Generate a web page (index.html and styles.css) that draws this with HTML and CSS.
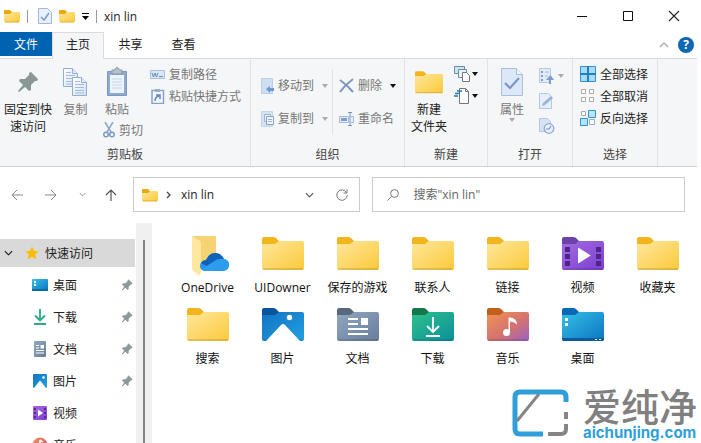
FILE: index.html
```html
<!DOCTYPE html>
<html lang="zh-CN">
<head>
<meta charset="utf-8">
<title>xin lin</title>
<link rel="stylesheet" href="styles.css">
</head>
<body>
<svg class="defs" width="0" height="0" aria-hidden="true">
  <defs>
    <linearGradient id="gYellow" x1="0" y1="0" x2="1" y2="1"><stop offset="0" stop-color="#ffe79c"/><stop offset="1" stop-color="#fbc93a"/></linearGradient>
    <linearGradient id="gBlue" x1="0" y1="0" x2="1" y2="1"><stop offset="0" stop-color="#1273c2"/><stop offset="1" stop-color="#22a0e2"/></linearGradient>
    <linearGradient id="gSlate" x1="0" y1="0" x2="1" y2="1"><stop offset="0" stop-color="#93a7c0"/><stop offset="1" stop-color="#667d9d"/></linearGradient>
    <linearGradient id="gGreen" x1="0" y1="0" x2="1" y2="1"><stop offset="0" stop-color="#30c18b"/><stop offset="1" stop-color="#0a8f9c"/></linearGradient>
    <linearGradient id="gMusic" x1="0" y1="0" x2="1" y2="1"><stop offset="0" stop-color="#f29455"/><stop offset=".55" stop-color="#d4736f"/><stop offset="1" stop-color="#9a62c4"/></linearGradient>
    <linearGradient id="gPurple" x1="0" y1="0" x2="1" y2="1"><stop offset="0" stop-color="#a36be0"/><stop offset="1" stop-color="#7d3fd0"/></linearGradient>
    <linearGradient id="gDesk" x1="0" y1="0" x2="1" y2="1"><stop offset="0" stop-color="#35c0e8"/><stop offset="1" stop-color="#0b74c0"/></linearGradient>
    <linearGradient id="gDoc" x1="0" y1="0" x2="1" y2="1"><stop offset="0" stop-color="#ffffff"/><stop offset="1" stop-color="#d3e2f5"/></linearGradient>
  </defs>
  <symbol id="tab" viewBox="0 0 42 36"><path d="M0 4q0-2 2-2h9q2 0 3 1l3 3h10v6H0z"/></symbol>
  <symbol id="body" viewBox="0 0 42 36"><path d="M0 9h13l4-3h23q2 0 2 2v25q0 2-2 2H2q-2 0-2-2z"/><path d="M1 34h40" stroke="#000" stroke-opacity=".22" stroke-width="1"/></symbol>
  <symbol id="folder" viewBox="0 0 42 36"><use href="#tab" fill="#f2b51d"/><use href="#body" fill="url(#gYellow)"/></symbol>
  <symbol id="miniFolder" viewBox="0 0 16 14"><path d="M0 2q0-1 1-1h5l2 2v3H0z" fill="#e9a910"/><path d="M0 5h6l2-2h7q1 0 1 1v8q0 1-1 1H1q-1 0-1-1z" fill="url(#gYellow)"/><path d="M1 13h14" stroke="#e6ad29" stroke-width="1"/></symbol>
  <symbol id="pin" viewBox="0 0 22 22"><path d="M14 1l7 7-1 2h-2l-4 4v5l-2 1-4-4-6 5-1-1 5-6-4-4 1-2h5l4-4V2z"/></symbol>
  <symbol id="caret" viewBox="0 0 6 4"><path d="M0 0h6L3 4z"/></symbol>
  <symbol id="chev" viewBox="0 0 10 6"><path d="M1 1l4 4 4-4" fill="none" stroke="currentColor" stroke-width="1.3"/></symbol>
  <symbol id="page" viewBox="0 0 15 19"><path d="M.5.5h9l5 5v13H.5z" fill="url(#gDoc)" stroke="#93aed3"/><path d="M9.500.5v5h5" fill="#e3edf9" stroke="#93aed3"/><path d="M3 4.500h5M3 7.500h9M3 10.500h9M3 13.500h9M3 16h9" stroke="#a5bbdb"/></symbol>
</svg>

<main class="window">
  <header class="titlebar">
    <svg class="i16" viewBox="0 0 16 14"><use href="#miniFolder"/></svg>
    <span class="vsep"></span>
    <button class="plain" aria-label="属性"><svg width="14" height="16" viewBox="0 0 14 16"><path d="M.5.5h9l4 4v11H.5z" fill="#e8f0fb" stroke="#a3b7d8"/><path d="M3 9l3 3 5-7" fill="none" stroke="#7c9ccc" stroke-width="1.500"/></svg></button>
    <button class="plain" aria-label="新建文件夹"><svg class="i16" viewBox="0 0 16 14"><use href="#miniFolder"/></svg></button>
    <button class="plain" aria-label="自定义"><svg width="7" height="7" viewBox="0 0 7 7"><path d="M0 0h7v1H0zM0 3h7L3.500 7z"/></svg></button>
    <span class="vsep"></span>
    <h1>xin lin</h1>
    <div class="controls">
      <button aria-label="最小化"><svg width="12" height="12"><path d="M1 6.500h10" stroke="#111"/></svg></button>
      <button aria-label="最大化"><svg width="12" height="12"><path d="M1.500 1.500h9v9h-9z" fill="none" stroke="#111"/></svg></button>
      <button aria-label="关闭"><svg width="12" height="12"><path d="M1 1l10 10M11 1L1 11" stroke="#222" stroke-width="1.100"/></svg></button>
    </div>
  </header>

  <nav class="tabs">
    <button class="file">文件</button>
    <button class="active">主页</button>
    <button>共享</button>
    <button>查看</button>
    <div class="help">
      <button class="plain" aria-label="折叠功能区"><svg width="10" height="6" viewBox="0 0 10 6"><path d="M1 5l4-4 4 4" fill="none" stroke="#aaa" stroke-width="1.400"/></svg></button>
      <button class="help-btn" aria-label="帮助">?</button>
    </div>
  </nav>

  <section class="ribbon">
    <div class="group clip">
      <div class="tools">
        <button class="big on pinbtn"><span class="pic"><svg width="22" height="22" fill="#8b9797"><use href="#pin"/></svg></span>固定到快<br>速访问</button>
        <button class="big"><span class="pic"><svg width="25" height="29" viewBox="0 0 25 29"><use href="#page" width="15" height="19"/><use href="#page" x="9" y="9" width="15" height="19"/></svg></span>复制</button>
        <div class="stack">
          <button class="big paste"><span class="pic"><svg width="22" height="30" viewBox="0 0 22 30"><path d="M1.500 4.500h19v24h-19z" fill="#8fa9cf" stroke="#7d98c0"/><path d="M4 8h14v18H4z" fill="#eef4fc"/><path d="M6 12h10M6 15h10M6 18h10M6 21h10" stroke="#c6d6ec"/><path d="M6 3h3q0-2.500 2-2.500T13 3h3v4H6z" fill="#b8c2cf" stroke="#8796ab"/></svg></span>粘贴</button>
          <button class="row cut"><svg width="12" height="16" viewBox="0 0 12 16"><path d="M2 0l6 10M10 0L4 10" stroke="#8fa6c6" stroke-width="1.500"/><circle cx="3" cy="12.500" r="2.300" fill="none" stroke="#7d9ac6" stroke-width="1.500"/><circle cx="9" cy="12.500" r="2.300" fill="none" stroke="#7d9ac6" stroke-width="1.500"/></svg>剪切</button>
        </div>
        <div class="list">
          <button class="row"><svg width="15" height="16" viewBox="0 0 15 16"><path d="M.5 4.500h14v8H.5z" fill="#d9e6f6" stroke="#a9c0de"/><path d="M2 7l1.500 4L5 7l1.500 4L8 7" fill="none" stroke="#6a8bbb"/><path d="M9 10.500h4" stroke="#6a8bbb"/></svg>复制路径</button>
          <button class="row"><svg width="15" height="16" viewBox="0 0 15 16"><path d="M2 2.500h11.500v13H2z" fill="#f4f8fd" stroke="#86a3cd" stroke-width="1.500"/><path d="M5 1h5v3H5z" fill="#9aabc2"/><path d="M5 13q0-4 4-5M6 7h4v4" fill="none" stroke="#5f85bf" stroke-width="1.500"/></svg>粘贴快捷方式</button>
        </div>
      </div>
      <h2>剪贴板</h2>
    </div>

    <div class="group org">
      <div class="tools">
        <div class="pair">
          <button class="row"><svg width="13" height="16" viewBox="0 0 13 16"><path d="M.5.5h11v15H.5z" fill="#cfdff3" stroke="#bccfe9"/><path d="M5 11l4-3v2h4v3H9v2z" fill="#7197cf"/></svg>移动到<svg class="caret dim" viewBox="0 0 6 4"><use href="#caret"/></svg></button>
          <button class="row"><svg width="13" height="16" viewBox="0 0 13 16"><path d="M.5.5h11v15H.5z" fill="#d5e3f5" stroke="#c3d4eb"/><path d="M3.500 3.500h6v7h-6z" fill="#eef4fb" stroke="#9bb4d8"/><path d="M5.500 5.500h7v8h-7z" fill="#eef4fb" stroke="#86a3cf"/><path d="M7 8.500h4M7 10.500h4" stroke="#9bb4d8"/></svg>复制到<svg class="caret dim" viewBox="0 0 6 4"><use href="#caret"/></svg></button>
        </div>
        <div class="pair second">
          <button class="row"><svg width="15" height="16" viewBox="0 0 15 16"><path d="M1 2q7 5 13 12M14 1Q6 7 1 14" fill="none" stroke="#7e97bd" stroke-width="2"/></svg>删除<svg class="caret" viewBox="0 0 6 4"><use href="#caret"/></svg></button>
          <button class="row"><svg width="15" height="16" viewBox="0 0 15 16"><path d="M.5 5.500h9v6h-9zM12 5.500h2.500v6H12" fill="#e3edf9" stroke="#a4bbdc"/><path d="M2 7h6v3H2z" fill="#7fa0d2"/><path d="M9 1.500h4M11 2v12M9 14.500h4" stroke="#7295cb"/></svg>重命名</button>
        </div>
      </div>
      <h2>组织</h2>
    </div>

    <div class="group new">
      <div class="tools">
        <button class="big on"><span class="pic"><svg width="28" height="24"><use href="#folder"/></svg></span>新建<br>文件夹</button>
        <div class="list">
          <button class="row tight" aria-label="新建项目"><svg width="16" height="16" viewBox="0 0 16 16"><path d="M.5.500h10v7H.5z" fill="#cfe5ee" stroke="#668fa4"/><path d="M4.500 3.500h8v8h-8z" fill="#e9f4f8" stroke="#668fa4"/><path d="M8.500 6.500h4l3 3v6h-7z" fill="#fff" stroke="#777"/></svg><svg class="caret" viewBox="0 0 6 4"><use href="#caret"/></svg></button>
          <button class="row tight" aria-label="轻松访问"><svg width="16" height="16" viewBox="0 0 16 16"><path d="M5.500 .5h6l3 3v12h-9z" fill="#fff" stroke="#777"/><path d="M11.500 .5v3h3" fill="none" stroke="#777"/><path d="M3 3h5M1 5.500h5M0 8h4" stroke="#2777bc" stroke-width="1.500"/></svg><svg class="caret" viewBox="0 0 6 4"><use href="#caret"/></svg></button>
        </div>
      </div>
      <h2>新建</h2>
    </div>

    <div class="group open">
      <div class="tools">
        <button class="big"><span class="pic"><svg width="22" height="28" viewBox="0 0 22 28"><path d="M.5.500h15l6 6v21H.5z" fill="#dce8f8" stroke="#a9bfdf"/><path d="M15.500.5v6h6" fill="#eff5fc" stroke="#a9bfdf"/><path d="M4 15l5 5 9-10" fill="none" stroke="#7795c4" stroke-width="2"/></svg></span>属性<svg class="caret dim" viewBox="0 0 6 4"><use href="#caret"/></svg></button>
        <div class="list">
          <button class="row" aria-label="打开"><svg width="15" height="16" viewBox="0 0 15 16"><path d="M.5.500h11v14H.5z" fill="#e2ebf8" stroke="#b4c7e3"/><path d="M2 3h2v2H2zM2 7h2v2H2zM2 11h2v2H2z" fill="#7d9ccb"/><path d="M6 4h4M6 8h3" stroke="#a4bbdc"/><path d="M10 16v-4H7l4.500-5 3.500 5h-3v4z" fill="#7d9ccb"/></svg><svg class="caret dim" viewBox="0 0 6 4"><use href="#caret"/></svg></button>
          <button class="row" aria-label="编辑"><svg width="15" height="16" viewBox="0 0 15 16"><path d="M.5.500h9l3 3v12H.5z" fill="#e5eefa" stroke="#b4c7e3"/><path d="M3 13l1-3 8-7 2 2-8 7z" fill="#9ab3d9"/></svg></button>
          <button class="row" aria-label="历史记录"><svg width="16" height="16" viewBox="0 0 16 16"><path d="M.5.500h8l3 3v10H.5z" fill="#d5e3f5" stroke="#b4c7e3"/><circle cx="10" cy="10.500" r="4.800" fill="#e8f0fa" stroke="#8eaad4" stroke-width="1.300"/><path d="M12 8l-2 3H7" fill="none" stroke="#6f8fc0" stroke-width="1.200"/></svg></button>
        </div>
      </div>
      <h2>打开</h2>
    </div>

    <div class="group select">
      <div class="tools">
        <div class="list">
          <button class="row on"><svg width="16" height="16" viewBox="0 0 16 16"><path d="M.5.500h15v15H.5z" fill="#a5dcfa" stroke="#3290cc"/><path d="M8 0v16M0 8h16" stroke="#2481c0" stroke-width="2"/></svg>全部选择</button>
          <button class="row on"><svg width="16" height="16" viewBox="0 0 16 16"><path d="M1.500 1.500h4v4h-4zM9.500 1.500h4v4h-4zM1.500 9.500h4v4h-4zM9.500 9.500h4v4h-4z" fill="#fff" stroke="#b2aaa6"/></svg>全部取消</button>
          <button class="row on"><svg width="16" height="16" viewBox="0 0 16 16"><path d="M1.500 1.500h4v4h-4zM9.500 9.500h5v5h-5z" fill="#fff" stroke="#9badb8"/><path d="M8.500 .5h7v7h-7zM.5 8.500h7v7h-7z" fill="#b5e4fb" stroke="#3290cc"/></svg>反向选择</button>
        </div>
      </div>
      <h2>选择</h2>
    </div>
  </section>

  <section class="navrow">
    <div class="arrows">
      <button aria-label="后退"><svg width="12" height="12"><path d="M12 6H1M6 1L1 6l5 5" fill="none" stroke="#888"/></svg></button>
      <button aria-label="前进"><svg width="12" height="12"><path d="M0 6h11M6 1l5 5-5 5" fill="none" stroke="#888"/></svg></button>
      <button aria-label="最近位置" class="mini"><svg width="7" height="5" viewBox="0 0 10 6"><use href="#chev"/></svg></button>
      <button aria-label="向上"><svg width="12" height="12"><path d="M6 12V1M1 6l5-5 5 5" fill="none" stroke="#555" stroke-width="1.200"/></svg></button>
    </div>
    <div class="address">
      <svg class="i16" viewBox="0 0 16 14"><use href="#miniFolder"/></svg>
      <svg width="5" height="8" viewBox="0 0 5 8"><path d="M1 1l3 3-3 3" fill="none" stroke="#444" stroke-width="1.300"/></svg>
      <span class="path">xin lin</span>
      <button class="plain" aria-label="历史"><svg width="9" height="6" viewBox="0 0 10 6"><use href="#chev"/></svg></button>
      <button class="plain" aria-label="刷新"><svg width="12" height="12" viewBox="0 0 12 12"><path d="M10.500 3.500A5.200 5.200 0 1 0 11.200 6M11 .5v3.500H7.500" fill="none" stroke="#777"/></svg></button>
    </div>
    <label class="search">
      <svg width="12" height="12" viewBox="0 0 12 12"><circle cx="7.500" cy="4.500" r="3.900" fill="none" stroke="#777"/><path d="M4.500 7.500L.5 11.500" stroke="#777"/></svg>
      <input type="text" aria-label="搜索" placeholder="搜索&quot;xin lin&quot;">
    </label>
  </section>

  <section class="content">
    <nav class="side">
      <a class="root" href="#"><svg width="9" height="6" viewBox="0 0 10 6"><use href="#chev"/></svg><svg width="14" height="14" viewBox="0 0 14 14"><path d="M7 .5l2 4.300 4.700.6-3.400 3.200.9 4.700L7 11l-4.200 2.300.9-4.700L.3 5.400 5 4.800z" fill="#fbbc0b"/></svg>快速访问</a>
      <a href="#"><svg class="ico" viewBox="0 0 16 16"><path d="M0 3q0-1 1-1h14q1 0 1 1v10q0 1-1 1H1q-1 0-1-1z" fill="url(#gDesk)"/><path d="M2 4h2v2H2zM2 7h2v2H2z" fill="#fff"/><path d="M0 12h16v1q0 1-1 1H1q-1 0-1-1z" fill="#0c6ba3"/></svg><span>桌面</span><svg class="pin"><use href="#pin"/></svg></a>
      <a href="#"><svg class="ico" viewBox="0 0 16 16"><path d="M8 0v11M3 6.500L8 11.500l5-5M2 15h12" fill="none" stroke="#27a88b" stroke-width="1.800"/></svg><span>下载</span><svg class="pin"><use href="#pin"/></svg></a>
      <a href="#"><svg class="ico" viewBox="0 0 16 16"><path d="M3 0h10q1 0 1 1v14q0 1-1 1H3q-1 0-1-1V1q0-1 1-1z" fill="url(#gSlate)"/><path d="M4 4h3v1H4zM4 6.500h3v1H4zM8.500 4H12v3.500H8.500zM4 9h8v1H4zM4 11.500h8v1H4z" fill="#fff"/></svg><span>文档</span><svg class="pin"><use href="#pin"/></svg></a>
      <a href="#"><svg class="ico" viewBox="0 0 16 16"><path d="M2 1h12q1 0 1 1v12q0 1-1 1H2q-1 0-1-1V2q0-1 1-1z" fill="url(#gBlue)"/><path d="M2 15l5.500-7q.5-.5 1 0l5.500 7z" fill="#fff"/><circle cx="11.500" cy="4.500" r="1.300" fill="#fff"/></svg><span>图片</span><svg class="pin"><use href="#pin"/></svg></a>
      <a href="#"><svg class="ico" viewBox="0 0 16 16"><path d="M2 1h12q1 0 1 1v12q0 1-1 1H2q-1 0-1-1V2q0-1 1-1z" fill="url(#gPurple)"/><path d="M2 3h2v2H2zM2 7h2v2H2zM2 11h2v2H2zM12 3h2v2h-2zM12 7h2v2h-2zM12 11h2v2h-2z" fill="#522a94"/><path d="M6 4.500l5 3.500-5 3.500z" fill="#fff"/></svg><span>视频</span></a>
      <a href="#"><svg class="ico" viewBox="0 0 16 16"><circle cx="8" cy="8" r="7.500" fill="url(#gMusic)"/><path d="M8 3v7M8 3l3 2" stroke="#fff" stroke-width="1.500" fill="none"/><circle cx="6.700" cy="10.500" r="1.700" fill="#fff"/></svg><span>音乐</span></a>
    </nav>
    <div class="scroll"><div class="thumb"></div></div>
    <div class="files">
      <figure><svg class="fi" viewBox="0 0 42 36"><path d="M6 1h23v33H6z" fill="#f6d273"/><path d="M5 1l8 5q1 1 1 2v28q0 5-3 4l-5-4q-1-1-1-2z" fill="#ffe7a0"/><path d="M19 36q-6 0-6-5t6-6q3-7 9-7t9 6q5 1 5 6t-6 6z" fill="#2593e3"/><path d="M14 28q2-3 5-3 3-7 9-7t9 6l-4 1-9 8z" fill="#0f62b8"/><path d="M15 34l14-9q4-2 8-1 5 1 5 6t-6 6H19q-2 0-4-2z" fill="#2c9dec"/></svg><figcaption>OneDrive</figcaption></figure>
      <figure><svg class="fi"><use href="#folder"/></svg><figcaption>UIDowner</figcaption></figure>
      <figure><svg class="fi"><use href="#folder"/></svg><figcaption>保存的游戏</figcaption></figure>
      <figure><svg class="fi"><use href="#folder"/></svg><figcaption>联系人</figcaption></figure>
      <figure><svg class="fi"><use href="#folder"/></svg><figcaption>链接</figcaption></figure>
      <figure><svg class="fi" viewBox="0 0 42 36"><use href="#tab" fill="#6c41a8"/><use href="#body" fill="url(#gPurple)"/><path d="M3 12h5v5H3zM3 19h5v5H3zM3 26h5v5H3zM34 12h5v5h-5zM34 19h5v5h-5zM34 26h5v5h-5z" fill="#4c2689"/><path d="M16 13.500q0-1 1-.6l11 7q1 .6 0 1.200l-11 7q-1 .4-1-.6z" fill="#fff"/></svg><figcaption>视频</figcaption></figure>
      <figure><svg class="fi"><use href="#folder"/></svg><figcaption>收藏夹</figcaption></figure>
      <figure><svg class="fi"><use href="#folder"/></svg><figcaption>搜索</figcaption></figure>
      <figure><svg class="fi" viewBox="0 0 42 36"><use href="#tab" fill="#0d539c"/><use href="#body" fill="url(#gBlue)"/><path d="M4 35l15-16q2-2 4 0l15 16z" fill="#fff"/><circle cx="27.500" cy="11.500" r="2.700" fill="#fff"/></svg><figcaption>图片</figcaption></figure>
      <figure><svg class="fi" viewBox="0 0 42 36"><use href="#tab" fill="#58687d"/><use href="#body" fill="url(#gSlate)"/><path d="M11 12h10v2H11zM11 17h10v2H11zM24 12h7v7h-7zM11 22h20v2H11zM11 27h20v2H11z" fill="#fff"/></svg><figcaption>文档</figcaption></figure>
      <figure><svg class="fi" viewBox="0 0 42 36"><use href="#tab" fill="#14784f"/><use href="#body" fill="url(#gGreen)"/><path d="M21 11v15M15 20l6 6 6-6M14 30h14" fill="none" stroke="#fff" stroke-width="1.800"/></svg><figcaption>下载</figcaption></figure>
      <figure><svg class="fi" viewBox="0 0 42 36"><use href="#tab" fill="#c0601c"/><use href="#body" fill="url(#gMusic)"/><circle cx="19.500" cy="26.500" r="3.500" fill="#fff"/><path d="M21.500 11.500h1.500q3 0 5 2 2 2 2 5l-3-2q-2-1-4-1v11h-1.500z" fill="#fff"/></svg><figcaption>音乐</figcaption></figure>
      <figure><svg class="fi" viewBox="0 0 42 36"><use href="#tab" fill="#0b68b5"/><use href="#body" fill="url(#gDesk)"/><path d="M3 12h3v3H3zM3 17h3v3H3z" fill="#fff"/><path d="M0 32h42v1q0 2-2 2H2q-2 0-2-2z" fill="#0a5b96"/><path d="M33 33h2v1h-2zM37 33h2v1h-2z" fill="#fff"/></svg><figcaption>桌面</figcaption></figure>
    </div>
  </section>
</main>

<aside class="brand">
  <svg width="57" height="48" viewBox="0 0 57 48"><path d="M31 45H8q-5 0-5-5V8q0-5 5-5h41q5 0 5 5v5" fill="none" stroke="#2f9fdc" stroke-width="5"/><path d="M36 45h13q5 0 5-5v-5M54 23v7" fill="none" stroke="#858585" stroke-width="4"/><path d="M5 32L27 5" stroke="#858585" stroke-width="3"/></svg>
  <div><strong>爱纯净</strong><span>aichunjing.com</span></div>
</aside>
</body>
</html>
```

FILE: styles.css
```css
* { box-sizing: border-box; }
body {
  margin: 0;
  height: 100vh;
  overflow: hidden;
  background: #fff;
  color: #222;
  font: 12px/17px "Open Sans", "Noto Sans CJK SC", sans-serif;
}
button {
  border: 0;
  padding: 0;
  background: none;
  font: inherit;
  color: inherit;
}
svg { display: block; flex: none; }
h1, h2, figure { margin: 0; font: inherit; }
a { color: inherit; text-decoration: none; }
.defs { position: absolute; }
.i16 { width: 16px; height: 14px; }
.window {
  display: flex;
  flex-direction: column;
  height: 100vh;
  margin-right: 4px;
}

/* title bar */
.titlebar {
  display: flex;
  align-items: center;
  gap: 7px;
  height: 32px;
  padding-left: 4px;
}
.vsep { width: 1px; height: 13px; background: #999; }
.vsep + button { margin-left: 3px; }
.titlebar h1 { flex: 1; }
.controls { display: flex; }
.controls button {
  display: grid;
  place-items: center;
  width: 46px;
  height: 32px;
}

/* tabs */
.tabs {
  display: flex;
  height: 27px;
  border-bottom: 1px solid #dadbdc;
}
.tabs > button { width: 53px; height: 24px; }
.tabs .file { width: 52px; background: #0063b1; color: #fff; }
.tabs > .active {
  width: 52px;
  height: 27px;
  padding-bottom: 3px;
  background: #f5f6f7;
  border: 1px solid #dadbdc;
  border-bottom: 0;
}
.help {
  display: flex;
  flex: 1;
  align-items: center;
  justify-content: flex-end;
  gap: 9px;
  padding-right: 3px;
}
.help-btn {
  width: 16px;
  height: 16px;
  border-radius: 50%;
  background: #0f66b5;
  color: #fff;
  font-weight: 700;
  line-height: 16px;
}

/* ribbon */
.ribbon {
  display: flex;
  background: #f5f6f7;
  border-bottom: 1px solid #cfd0d1;
}
.group {
  display: flex;
  flex-direction: column;
  height: 107px;
  padding: 4px 0 3px;
  border-right: 1px solid #e2e3e4;
  color: #767676;
}
.group h2 { color: #444; text-align: center; }
.tools { display: flex; flex: 1; }
.clip { width: 251px; }
.org { width: 154px; }
.new { width: 83px; }
.open, .select { width: 85px; }
.on { color: #222; }
.big {
  display: flex;
  flex-direction: column;
  align-items: center;
  align-self: flex-start;
  padding-top: 4px;
}
.pic {
  display: grid;
  place-items: center;
  height: 30px;
  margin-bottom: 4px;
}
.row {
  display: flex;
  align-items: center;
  gap: 4px;
  height: 22px;
  white-space: nowrap;
}
.caret { width: 6px; height: 4px; margin-left: 4px; fill: #111; }
.caret.dim { fill: #aaa; }
.big .caret { margin: 0; }
.tight .caret { margin-left: -2px; }
.clip .tools { padding-left: 4px; }
.pinbtn { width: 48px; margin-right: 11px; }
.stack { margin: 0 7px 0 15px; }
.paste { width: 28px; }
.cut { margin-top: 1px; }
.org .tools { padding: 6px 0 0 10px; }
.pair { height: 66px; }
.pair .row { height: 33px; }
.pair.second { padding-left: 6px; margin-left: 4px; border-left: 1px solid #e2e3e4; }
.new .tools { padding-left: 6px; gap: 7px; }
.open .tools { padding-left: 12px; gap: 15px; }
.open .list .row { height: 25px; }
.open .list .caret { margin-left: 0; }
.select .tools { padding-left: 7px; }

/* address row */
.navrow {
  display: flex;
  gap: 12px;
  padding: 10px 12px 11px 0;
}
.arrows {
  display: flex;
  align-items: center;
  gap: 22px;
  width: 121px;
  padding-left: 11px;
}
.arrows .mini { color: #888; }
.arrows .mini + button { margin-left: -3px; }
.address, .search {
  display: flex;
  align-items: center;
  height: 35px;
  border: 1px solid #ccc;
}
.address { flex: 228; gap: 8px; padding: 0 11px 0 8px; color: #555; }
.path { flex: 1; padding-left: 2px; color: #222; }
.address .plain { margin-left: 14px; }
.search { flex: 312; gap: 14px; padding: 0 14px; }
.search input {
  flex: 1;
  min-width: 0;
  border: 0;
  padding: 0;
  background: none;
  font: inherit;
}
.search input::placeholder { color: #666; opacity: 1; }

/* folders */
.content { display: flex; flex: 1; min-height: 0; }
.side { width: 136px; padding-top: 16px; overflow: hidden; }
.side a {
  display: flex;
  align-items: center;
  gap: 5px;
  height: 32px;
  padding: 0 3px 0 32px;
}
.side .root {
  gap: 6px;
  height: 28px;
  margin: 0 1px 2px 0;
  padding: 0 0 0 4px;
  background: #d9d9d9;
}
.root svg:first-child { margin-right: 6px; }
.side span { flex: 1; }
.ico { width: 16px; height: 16px; }
.pin { width: 12px; height: 12px; fill: #8f9a9c; }
.scroll { width: 16px; padding-top: 17px; background: #f0f0f0; }
.thumb { width: 2px; height: 100%; margin: 0 auto; background: #858585; }
.files {
  display: grid;
  flex: 1;
  grid-template-columns: repeat(auto-fill, 75px);
  align-content: start;
  row-gap: 9px;
  padding: 12px 0 0 18px;
  color: #111;
}
.files figure {
  display: flex;
  flex-direction: column;
  align-items: center;
  gap: 8px;
}
.fi { width: 42px; height: 36px; overflow: visible; }
figcaption { line-height: 18px; white-space: nowrap; }

/* site mark over the window corner */
.brand {
  position: absolute;
  right: 4px;
  bottom: 2px;
  display: flex;
  align-items: center;
  gap: 14px;
}
.brand div { width: 114px; }
.brand strong {
  display: block;
  color: #808080;
  font: 500 38px/40px "Noto Sans CJK SC", sans-serif;
}
.brand span {
  display: block;
  color: #2f9fdc;
  font: 700 15px/16px Inter, sans-serif;
}
```
